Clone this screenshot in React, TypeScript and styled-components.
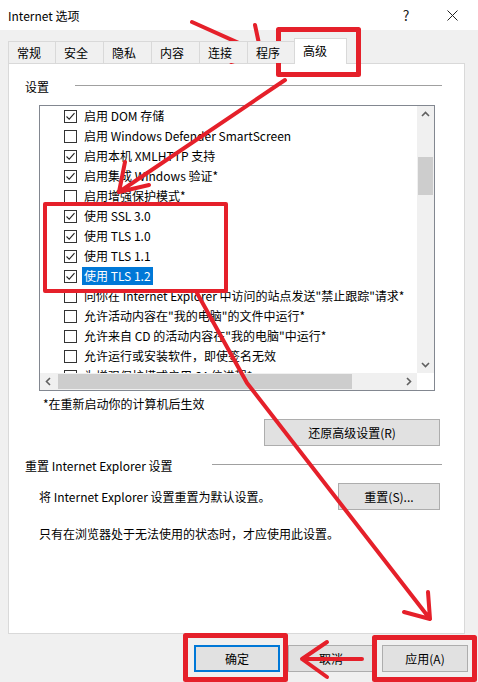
import React from 'react';
import styled, { createGlobalStyle } from 'styled-components';

const GlobalStyle = createGlobalStyle`
  html, body {
    margin: 0;
    padding: 0;
  }
  body {
    font-family: "Noto Sans CJK SC", "Noto Sans", sans-serif;
  }
`;

const Window = styled.div`
  position: relative;
  width: 478px;
  height: 682px;
  background: #f0f0f0;
  overflow: hidden;
  font-size: 12px;
  color: #000;
`;

const TitleBar = styled.div`
  height: 30px;
  background: #fff;
  display: flex;
  align-items: center;
  padding-left: 8px;
  padding-right: 3px;
`;

const Title = styled.div`
  flex: 1;
  font-size: 12px;
`;

const TitleButton = styled.div`
  width: 46px;
  height: 30px;
  display: flex;
  align-items: center;
  justify-content: center;
  font-size: 14px;
  color: #222;
`;

const Body = styled.div`
  padding: 8px 13px 0 8px;
`;

const TabRow = styled.div`
  display: flex;
  align-items: flex-end;
  height: 25px;
  position: relative;
  z-index: 1;
`;

const Tab = styled.div<{ $active?: boolean; $w: number }>`
  box-sizing: border-box;
  width: ${p => p.$w}px;
  height: ${p => (p.$active ? 26 : 22)}px;
  margin-left: -1px;
  margin-bottom: ${p => (p.$active ? -1 : 0)}px;
  padding-left: 8px;
  padding-top: ${p => (p.$active ? 3 : 2)}px;
  border: 1px solid #d9d9d9;
  border-bottom: none;
  background: ${p => (p.$active ? '#fff' : '#f0f0f0')};
  line-height: 18px;
  &:first-child {
    margin-left: 0;
  }
`;

const Panel = styled.div`
  box-sizing: border-box;
  height: 571px;
  background: #fff;
  border: 1px solid #d9d9d9;
  padding: 14px 22px 0 16px;
  display: flex;
  flex-direction: column;
`;

const GroupHeader = styled.div`
  display: flex;
  align-items: center;
  height: 16px;
  justify-content: space-between;
`;

const GroupLine = styled.div<{ $w: number }>`
  width: ${p => p.$w}px;
  height: 1px;
  background: #a0a0a0;
  margin-top: -2px;
`;

const ListBox = styled.div`
  box-sizing: border-box;
  width: 396px;
  height: 286px;
  margin: 11px 0 0 14px;
  border: 1px solid #828790;
  display: grid;
  grid-template-columns: 377px 17px;
  grid-template-rows: 267px 17px;
`;

const ListContent = styled.div`
  overflow: hidden;
  padding-left: 24px;
`;

const Row = styled.div`
  display: flex;
  align-items: center;
  height: 20px;
  white-space: nowrap;
`;

const CheckBox = styled.div`
  box-sizing: border-box;
  width: 13px;
  height: 13px;
  flex: none;
  border: 1px solid #333;
  background: #fff;
  display: flex;
  align-items: center;
  justify-content: center;
  margin-right: 5px;
`;

const RowLabel = styled.span<{ $selected?: boolean }>`
  padding: 0 2px;
  line-height: 18px;
  background: ${p => (p.$selected ? '#0078d7' : 'transparent')};
  color: ${p => (p.$selected ? '#fff' : '#000')};
`;

const VScroll = styled.div`
  background: #f0f0f0;
  display: flex;
  flex-direction: column;
  align-items: center;
`;

const HScroll = styled.div`
  background: #f0f0f0;
  display: flex;
  align-items: center;
`;

const ScrollArrow = styled.div`
  width: 17px;
  height: 17px;
  flex: none;
  display: flex;
  align-items: center;
  justify-content: center;
`;

const VThumb = styled.div<{ $top: number; $h: number }>`
  width: 15px;
  height: ${p => p.$h}px;
  margin-top: ${p => p.$top}px;
  background: #cdcdcd;
`;

const HThumb = styled.div<{ $w: number }>`
  width: ${p => p.$w}px;
  height: 15px;
  margin-left: 1px;
  background: #cdcdcd;
`;

const Corner = styled.div`
  background: #fff;
`;

const Note = styled.div`
  margin: 6px 0 0 18px;
  line-height: 14px;
`;

const Button = styled.div<{ $w: number; $default?: boolean }>`
  box-sizing: border-box;
  width: ${p => p.$w}px;
  height: 27px;
  background: #e1e1e1;
  border: ${p => (p.$default ? '2px solid #0078d7' : '1px solid #adadad')};
  display: flex;
  align-items: center;
  justify-content: center;
  flex: none;
`;

const RestoreButton = styled(Button)`
  align-self: flex-end;
  margin: 8px 2px 0 0;
`;

const ResetHeader = styled(GroupHeader)`
  margin-top: 11px;
  margin-right: 0;
`;

const ResetRow = styled.div`
  display: flex;
  align-items: center;
  justify-content: space-between;
  margin: 10px 2px 0 14px;
`;

const Hint = styled.div`
  margin: 17px 0 0 14px;
  line-height: 14px;
`;

const Footer = styled.div`
  display: flex;
  justify-content: flex-end;
  gap: 8px;
  padding: 11px 10px 0 0;
`;

const Overlay = styled.svg`
  position: absolute;
  left: 0;
  top: 0;
  pointer-events: none;
`;

const Check = () => (
  <svg width="11" height="11" viewBox="0 0 11 11">
    <path d="M1.5 5.5 L4.2 8.2 L9.5 2.2" fill="none" stroke="#222" strokeWidth="1.1" />
  </svg>
);

const Chevron = ({ dir }: { dir: 'up' | 'down' | 'left' | 'right' }) => {
  const d = {
    up: 'M1 6 L4.5 2.5 L8 6',
    down: 'M1 3 L4.5 6.5 L8 3',
    left: 'M6 1 L2.5 4.5 L6 8',
    right: 'M3 1 L6.5 4.5 L3 8',
  }[dir];
  return (
    <svg width="9" height="9" viewBox="0 0 9 9">
      <path d={d} fill="none" stroke="#606060" strokeWidth="1.6" />
    </svg>
  );
};

const tabs = [
  { label: '常规', w: 48 },
  { label: '安全', w: 49 },
  { label: '隐私', w: 49 },
  { label: '内容', w: 49 },
  { label: '连接', w: 49 },
  { label: '程序', w: 48 },
  { label: '高级', w: 53, active: true },
];

const rows = [
  { label: '启用 DOM 存储', checked: true },
  { label: '启用 Windows Defender SmartScreen', checked: false },
  { label: '启用本机 XMLHTTP 支持', checked: true },
  { label: '启用集成 Windows 验证*', checked: true },
  { label: '启用增强保护模式*', checked: false },
  { label: '使用 SSL 3.0', checked: true },
  { label: '使用 TLS 1.0', checked: true },
  { label: '使用 TLS 1.1', checked: true },
  { label: '使用 TLS 1.2', checked: true, selected: true },
  { label: '向你在 Internet Explorer 中访问的站点发送"禁止跟踪"请求*', checked: false },
  { label: '允许活动内容在"我的电脑"的文件中运行*', checked: false },
  { label: '允许来自 CD 的活动内容在"我的电脑"中运行*', checked: false },
  { label: '允许运行或安装软件，即使签名无效', checked: false },
  { label: '为增强保护模式启用 64 位进程*', checked: false },
];

const RED = '#e5202a';

export default function App() {
  return (
    <Window>
      <GlobalStyle />
      <TitleBar>
        <Title>Internet 选项</Title>
        <TitleButton>?</TitleButton>
        <TitleButton>
          <svg width="11" height="11" viewBox="0 0 11 11">
            <path d="M0.5 0.5 L10.5 10.5 M10.5 0.5 L0.5 10.5" stroke="#222" strokeWidth="1" />
          </svg>
        </TitleButton>
      </TitleBar>

      <Body>
        <TabRow>
          {tabs.map(t => (
            <Tab key={t.label} $w={t.w} $active={t.active}>
              {t.label}
            </Tab>
          ))}
        </TabRow>

        <Panel>
          <GroupHeader>
            <span>设置</span>
            <GroupLine $w={367} />
          </GroupHeader>

          <ListBox>
            <ListContent>
              {rows.map(r => (
                <Row key={r.label}>
                  <CheckBox>{r.checked && <Check />}</CheckBox>
                  <RowLabel $selected={r.selected}>{r.label}</RowLabel>
                </Row>
              ))}
            </ListContent>
            <VScroll>
              <ScrollArrow>
                <Chevron dir="up" />
              </ScrollArrow>
              <VThumb $top={34} $h={38} />
              <div style={{ flex: 1 }} />
              <ScrollArrow>
                <Chevron dir="down" />
              </ScrollArrow>
            </VScroll>
            <HScroll>
              <ScrollArrow>
                <Chevron dir="left" />
              </ScrollArrow>
              <HThumb $w={294} />
              <div style={{ flex: 1 }} />
              <ScrollArrow>
                <Chevron dir="right" />
              </ScrollArrow>
            </HScroll>
            <Corner />
          </ListBox>

          <Note>*在重新启动你的计算机后生效</Note>
          <RestoreButton $w={176}>还原高级设置(R)</RestoreButton>

          <ResetHeader>
            <span>重置 Internet Explorer 设置</span>
            <GroupLine $w={230} />
          </ResetHeader>
          <ResetRow>
            <span>将 Internet Explorer 设置重置为默认设置。</span>
            <Button $w={102}>重置(S)...</Button>
          </ResetRow>
          <Hint>只有在浏览器处于无法使用的状态时，才应使用此设置。</Hint>
        </Panel>
      </Body>

      <Footer>
        <Button $w={86} $default>确定</Button>
        <Button $w={86}>取消</Button>
        <Button $w={86}>应用(A)</Button>
      </Footer>

      <Overlay width="478" height="682" viewBox="0 0 478 682">
        <g fill="none" stroke={RED} strokeLinecap="round" strokeLinejoin="round">
          <rect x="278.5" y="29.5" width="80" height="45" strokeWidth="5" strokeLinecap="butt" />
          <rect x="45" y="204" width="181" height="87" strokeWidth="4" />
          <rect x="185.5" y="635.5" width="100" height="44" strokeWidth="5" />
          <rect x="374.5" y="637.5" width="100" height="42" strokeWidth="5" />

          <path d="M192 22 L261 53 M255 25 L261 53 L231 62" strokeWidth="4" />
          <path d="M285 80 L119 192 M125 162 L119 192 L149 185" strokeWidth="4" />
          <path d="M197 293 L247 383 L430 619 M428 592 L430 619 L404 612" strokeWidth="4" />
          <path d="M362 659 L302 659 M327 642 L302 659 L327 677" strokeWidth="4" />
        </g>
      </Overlay>
    </Window>
  );
}
